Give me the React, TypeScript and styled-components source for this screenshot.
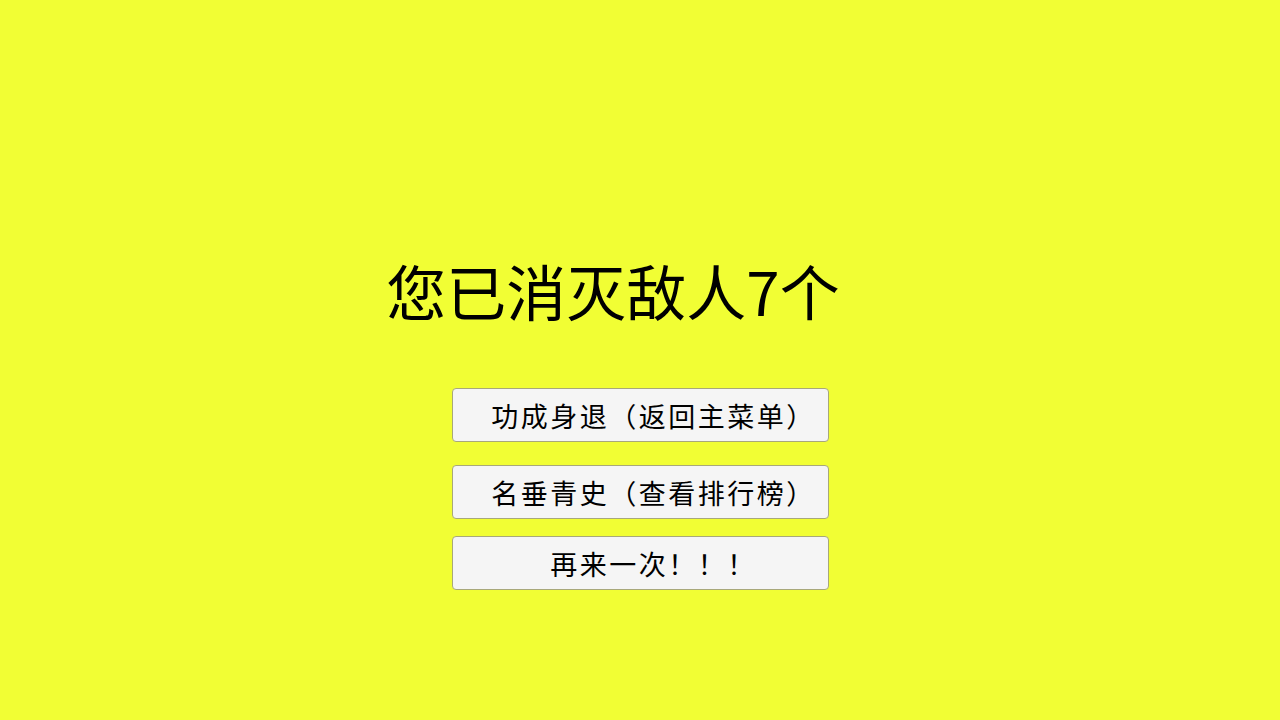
import React from "react";
import styled, { createGlobalStyle } from "styled-components";

const GlobalStyle = createGlobalStyle`
  html, body {
    margin: 0;
    padding: 0;
    background: #f1fe34;
  }
  body {
    font-family: "Noto Sans CJK SC", "Noto Sans", sans-serif;
  }
`;

const Screen = styled.div`
  width: 1280px;
  height: 720px;
  background: #f1fe34;
  display: flex;
  flex-direction: column;
  align-items: center;
`;

const Title = styled.h1`
  margin: 257px 0 0;
  padding-right: 54px;
  font-size: 60px;
  font-weight: 400;
  line-height: 66px;
  color: #000;
`;

const Menu = styled.div`
  margin-top: 65px;
  display: flex;
  flex-direction: column;
`;

const MenuButton = styled.button<{ $top?: number }>`
  width: 377px;
  height: 54px;
  margin-top: ${(p) => p.$top ?? 0}px;
  box-sizing: border-box;
  border: 1px solid #a8a87a;
  border-radius: 4px;
  background: #f5f5f5;
  color: #000;
  font-family: "Noto Sans CJK SC", "Noto Sans", sans-serif;
  font-size: 27px;
  letter-spacing: 2.5px;
  line-height: 1;
  padding: 0 0 0 27px;
  cursor: pointer;
`;

export default function App() {
  return (
    <Screen>
      <GlobalStyle />
      <Title>您已消灭敌人7个</Title>
      <Menu>
        <MenuButton>功成身退（返回主菜单）</MenuButton>
        <MenuButton $top={23}>名垂青史（查看排行榜）</MenuButton>
        <MenuButton $top={17}>再来一次！！！</MenuButton>
      </Menu>
    </Screen>
  );
}
